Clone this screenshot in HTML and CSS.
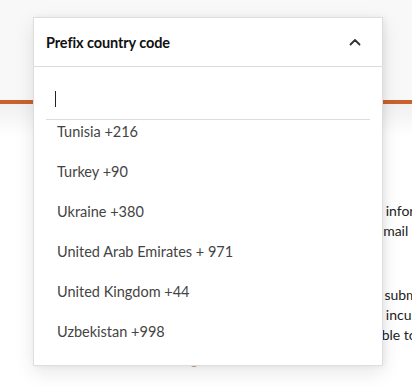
FILE: index.html
```html
<!DOCTYPE html>
<html lang="en">
<head>
<meta charset="utf-8">
<title>Prefix country code</title>
<link rel="stylesheet" href="styles.css">
</head>
<body>
<div class="page">
  <header class="topbar"></header>
  <div class="accent"></div>
  <main class="content">
    <div class="consent">
      <p class="para para-1">
        <span class="line">I hereby assent to the processing of all my personal data; information</span>
        <span class="line">about this further processing of data is available in the e-mail</span>
      </p>
      <p class="para para-2">
        <span class="line">By completing this form and clicking on the last button, I submit</span>
        <span class="line">my requests and confirm that I am aware that I'm not yet incurring</span>
        <span class="line">any extra charges and I am aware that I will further be liable to</span>
      </p>
      <p class="link-line">Learn about handling</p>
    </div>
  </main>

  <div class="dropdown">
    <div class="dd-header">
      <span class="dd-title">Prefix country code</span>
      <svg class="chevron" width="12" height="8" viewBox="0 0 12 8"><path d="M1.5 6.5 L6 2 L10.5 6.5" fill="none" stroke="#333" stroke-width="1.8" stroke-linecap="round" stroke-linejoin="round"/></svg>
    </div>
    <div class="dd-search">
      <span class="caret"></span>
    </div>
    <ul class="dd-list" id="list">
      <li>Thailand +66</li>
      <li>Tunisia +216</li>
      <li>Turkey +90</li>
      <li>Ukraine +380</li>
      <li>United Arab Emirates + 971</li>
      <li>United Kingdom +44</li>
      <li>Uzbekistan +998</li>
    </ul>
  </div>
</div>
<script src="script.js"></script>
</body>
</html>
```

FILE: styles.css
```css
* { box-sizing: border-box; }
html, body { margin: 0; padding: 0; }
body {
  width: 412px;
  height: 387px;
  overflow: hidden;
  font-family: Lato, "Noto Sans", sans-serif;
  background: #ffffff;
}
.page {
  position: relative;
  width: 412px;
  height: 387px;
  overflow: hidden;
}
.topbar {
  height: 100px;
  background: #f8f8f8;
}
.accent {
  height: 4px;
  background: #c9622d;
}
.content {
  height: 283px;
  background: linear-gradient(#f1f1f1 0px, #f6f6f6 14px, #ffffff 32px);
  padding-top: 97px;
}
.consent {
  padding-left: 36px;
  white-space: nowrap;
  color: #222;
  font-size: 14px;
  line-height: 20px;
}
.para { margin: 0; }
.line { display: block; }
.para-2 { margin-top: 44px; }
.link-line {
  margin: 5px 0 0;
  padding-left: 33px;
  color: #c9a27f;
  font-size: 14px;
}

.dropdown {
  position: absolute;
  left: 33px;
  top: 17px;
  width: 350px;
  height: 349px;
  background: #fff;
  border: 1px solid #dedede;
  box-shadow: 0 6px 18px rgba(0,0,0,0.10), 2px 0 6px rgba(0,0,0,0.05);
  display: flex;
  flex-direction: column;
}
.dd-header {
  height: 49px;
  flex: none;
  border-bottom: 1px solid #dcdcdc;
  display: flex;
  align-items: center;
  justify-content: space-between;
  padding: 0 21px 0 12px;
}
.dd-title {
  font-weight: 700;
  font-size: 14.5px;
  color: #111;
  letter-spacing: -0.1px;
}
.chevron { display: block; margin-top: -1px; }
.dd-search {
  height: 53px;
  flex: none;
  margin: 0 12px;
  border-bottom: 1px solid #dcdcdc;
  display: flex;
  align-items: center;
  padding-left: 9px;
  padding-top: 11px;
}
.caret {
  width: 1px;
  height: 16px;
  background: #222;
}
.dd-list {
  list-style: none;
  margin: 0;
  padding: 0 0 14px;
  flex: 1;
  overflow-y: auto;
  scrollbar-width: none;
}
.dd-list::-webkit-scrollbar { display: none; }
.dd-list li {
  height: 40px;
  display: flex;
  align-items: center;
  padding-left: 23px;
  font-size: 14.5px;
  color: #444;
}
```

FILE: script.js
```js
var l = document.getElementById('list');
l.scrollTop = l.scrollHeight;
```
